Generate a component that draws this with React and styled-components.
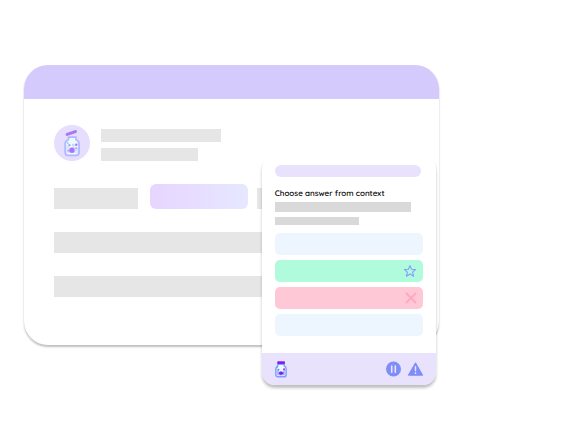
import React from "react";
import styled, { createGlobalStyle } from "styled-components";

const GlobalStyle = createGlobalStyle`
  *, *::before, *::after { box-sizing: border-box; }
  body {
    margin: 0;
    background: #fff;
    font-family: Quicksand, Lato, sans-serif;
    text-rendering: geometricPrecision;
  }
`;

const Page = styled.main`
  padding: 65px 131px 80px 24px;
`;

const Card = styled.section`
  position: relative;
  background: #fff;
  border-radius: 24px;
  box-shadow: 0 2px 2px rgba(0, 0, 0, 0.25);
`;

const CardHeader = styled.header`
  height: 34px;
  border-radius: 24px 24px 0 0;
  background: #d5cafc;
`;

const CardBody = styled.div`
  display: flex;
  flex-direction: column;
  gap: 23px;
  padding: 26px 30px 48px;
`;

const Profile = styled.div`
  display: flex;
  align-items: flex-end;
  gap: 11px;
`;

const Avatar = styled.div`
  display: flex;
  width: 36px;
  height: 36px;
  border-radius: 50%;
  background: #e5defd;
`;

const Lines = styled.div`
  display: flex;
  flex: 1;
  flex-direction: column;
  gap: 6px;
`;

const Placeholder = styled.div`
  width: ${({ $width }) => $width || "100%"};
  height: ${({ $height }) => $height}px;
  background: ${({ $dark }) => ($dark ? "#d9d9d9" : "#e6e6e6")};
`;

const Tabs = styled.div`
  display: grid;
  grid-template-columns: 84px 98px 1fr;
  align-items: end;
  column-gap: 12px;
`;

const LastTab = styled(Placeholder)`
  width: auto;
  margin-left: -3px;
`;

const Highlight = styled.div`
  height: 25px;
  border-radius: 6px;
  background: linear-gradient(90deg, #e7d5ff, #e6e8ff);
`;

const Widget = styled.aside`
  position: absolute;
  right: 3px;
  bottom: -40px;
  width: 42%;
  border-radius: 13px;
  background: #fff;
  box-shadow: 0 3px 3px rgba(0, 0, 0, 0.25);
`;

const WidgetBody = styled.div`
  display: flex;
  flex-direction: column;
  padding: 9px 13px 17px;
`;

const Progress = styled.div`
  height: 12px;
  margin-right: 2px;
  border-radius: 6px;
  background: #e9e2fc;
`;

const Question = styled.h2`
  margin: 10px 0 3px;
  font-size: 8px;
  font-weight: 600;
  line-height: 12px;
  color: #000;
  white-space: nowrap;
`;

const Context = styled.div`
  display: flex;
  flex-direction: column;
  gap: 5px;
  margin-bottom: 8px;
`;

const Answers = styled.div`
  display: flex;
  flex-direction: column;
  gap: 5px;
`;

const tones = { neutral: "#edf6ff", correct: "#affbdc", wrong: "#fec8d6" };

const Answer = styled.button`
  display: flex;
  align-items: center;
  justify-content: flex-end;
  width: 100%;
  height: 22px;
  padding: 0 6px;
  border: 0;
  border-radius: 5px;
  background: ${({ $tone }) => tones[$tone]};
  cursor: pointer;
`;

const WidgetFooter = styled.footer`
  display: flex;
  align-items: center;
  gap: 5px;
  height: 32px;
  padding: 0 12px 0 13px;
  border-radius: 0 0 13px 13px;
  background: #e9e2fc;
`;

const Logo = styled.span`
  display: flex;
  margin-right: auto;
`;

const IconButton = styled.button`
  display: flex;
  padding: 0;
  border: 0;
  background: none;
  cursor: pointer;
`;

const OpenJar = () => (
  <svg width="36" height="36" viewBox="0 0 36 36" aria-hidden="true">
    <path d="M13.2 9.4 21.4 6.6" stroke="#aa73fa" strokeWidth="3" strokeLinecap="round" />
    <path
      d="M14.5 12.2h7.5v2.3c2.1 1 3 2.2 3 4.1v9c0 1.8-.9 2.7-2.7 2.7h-8.4c-1.8 0-2.7-.9-2.7-2.7v-9c0-1.9.9-3.1 3.3-4.1z"
      fill="#eff7ff" stroke="#b0b9fd" strokeWidth="1.8" strokeLinejoin="round"
    />
    <path d="M12.3 20.5h3v2h3v-3h3v3h2.7v5.5H12.3z" fill="#d7e6ff" />
    <circle cx="18" cy="25.3" r="2.7" fill="#aa73fa" />
    <circle cx="22.3" cy="19.7" r="1.2" fill="#c26ae9" />
    <circle cx="15.4" cy="20.2" r="1.1" fill="#86a8ff" />
    <circle cx="13.8" cy="18" r="1" fill="#8bdcf2" />
    <circle cx="22.3" cy="23.2" r="1" fill="#93b1fc" />
    <circle cx="14.2" cy="25.7" r="1" fill="#d494ef" />
    <circle cx="19" cy="19.8" r="1" fill="#a9dcf5" />
  </svg>
);

const ClosedJar = () => (
  <svg width="12" height="18" viewBox="0 0 12 18" aria-hidden="true">
    <path d="M2.8 4.2h6.4v1.6c1.4.7 1.9 1.6 1.9 2.9v6c0 1.4-.7 2.1-2.1 2.1H3c-1.4 0-2.1-.7-2.1-2.1v-6c0-1.3.5-2.2 1.9-2.9z" fill="#ecfaff" stroke="#8799ff" strokeWidth="1.5" />
    <path d="M1.7 9.5H4v2h4v-2h2.3v6H1.7z" fill="#b0c3ff" />
    <rect x="2.2" y="1.2" width="7.8" height="2.8" rx="1" fill="#7b22ef" />
    <path d="M3.8 12.2h1.4l.8-1.4.9 1.4h1.6v2H6.9l-.9 1.2-.8-1.2H3.8z" fill="#761fe9" />
    <circle cx="9" cy="9.2" r="1" fill="#a52ddf" />
    <circle cx="3.5" cy="9.6" r=".9" fill="#527bff" />
    <circle cx="2.3" cy="7.6" r=".7" fill="#35c8e2" />
  </svg>
);

const StarIcon = () => (
  <svg width="14" height="14" viewBox="0 0 14 14" aria-hidden="true">
    <path d="m7 1.6 1.6 3.7 4 .3-3 2.6 1 4L7 10.1l-3.6 2.1 1-4-3-2.6 4-.3z" fill="none" stroke="#839dfa" strokeWidth="1.1" strokeLinejoin="round" />
  </svg>
);

const CrossIcon = () => (
  <svg width="12" height="12" viewBox="0 0 12 12" aria-hidden="true">
    <path d="m1.5 1.5 9 9m0-9-9 9" stroke="#ffa8be" strokeWidth="1.8" strokeLinecap="round" />
  </svg>
);

const PauseIcon = () => (
  <svg width="16" height="16" viewBox="0 0 16 16" aria-hidden="true">
    <circle cx="7.5" cy="8" r="7.5" fill="#7f8df9" />
    <path d="M5.7 5v6.2M9.3 5v6.2" stroke="#e9e5fd" strokeWidth="1.6" strokeLinecap="round" />
  </svg>
);

const WarningIcon = () => (
  <svg width="17" height="16" viewBox="0 0 17 16" aria-hidden="true">
    <path d="M8.5 1.8 15.7 14.2H1.3z" fill="#7f8df9" stroke="#7f8df9" strokeLinejoin="round" />
    <path d="M8.5 5.7v4" stroke="#e9e5fd" strokeWidth="1.4" strokeLinecap="round" />
    <circle cx="8.5" cy="12.2" r=".9" fill="#e9e5fd" />
  </svg>
);

const answers = [
  { tone: "neutral", label: "First answer" },
  { tone: "correct", label: "Second answer, correct", icon: <StarIcon /> },
  { tone: "wrong", label: "Third answer, wrong", icon: <CrossIcon /> },
  { tone: "neutral", label: "Fourth answer" },
];

export default function App() {
  return (
    <Page>
      <GlobalStyle />
      <Card>
        <CardHeader />
        <CardBody>
          <Profile>
            <Avatar><OpenJar /></Avatar>
            <Lines>
              <Placeholder $width="120px" $height={13} />
              <Placeholder $width="97px" $height={13} />
            </Lines>
          </Profile>
          <Tabs>
            <Placeholder $height={21} />
            <Highlight />
            <LastTab $height={21} />
          </Tabs>
          <Placeholder $height={21} />
          <Placeholder $height={21} />
        </CardBody>
        <Widget>
          <WidgetBody>
            <Progress />
            <Question>Choose answer from context</Question>
            <Context>
              <Placeholder $dark $width="92%" $height={10} />
              <Placeholder $dark $width="57%" $height={8} />
            </Context>
            <Answers>
              {answers.map(({ tone, label, icon }) => (
                <Answer key={label} type="button" $tone={tone} aria-label={label}>
                  {icon}
                </Answer>
              ))}
            </Answers>
          </WidgetBody>
          <WidgetFooter>
            <Logo><ClosedJar /></Logo>
            <IconButton type="button" aria-label="Pause"><PauseIcon /></IconButton>
            <IconButton type="button" aria-label="Report a problem"><WarningIcon /></IconButton>
          </WidgetFooter>
        </Widget>
      </Card>
    </Page>
  );
}
